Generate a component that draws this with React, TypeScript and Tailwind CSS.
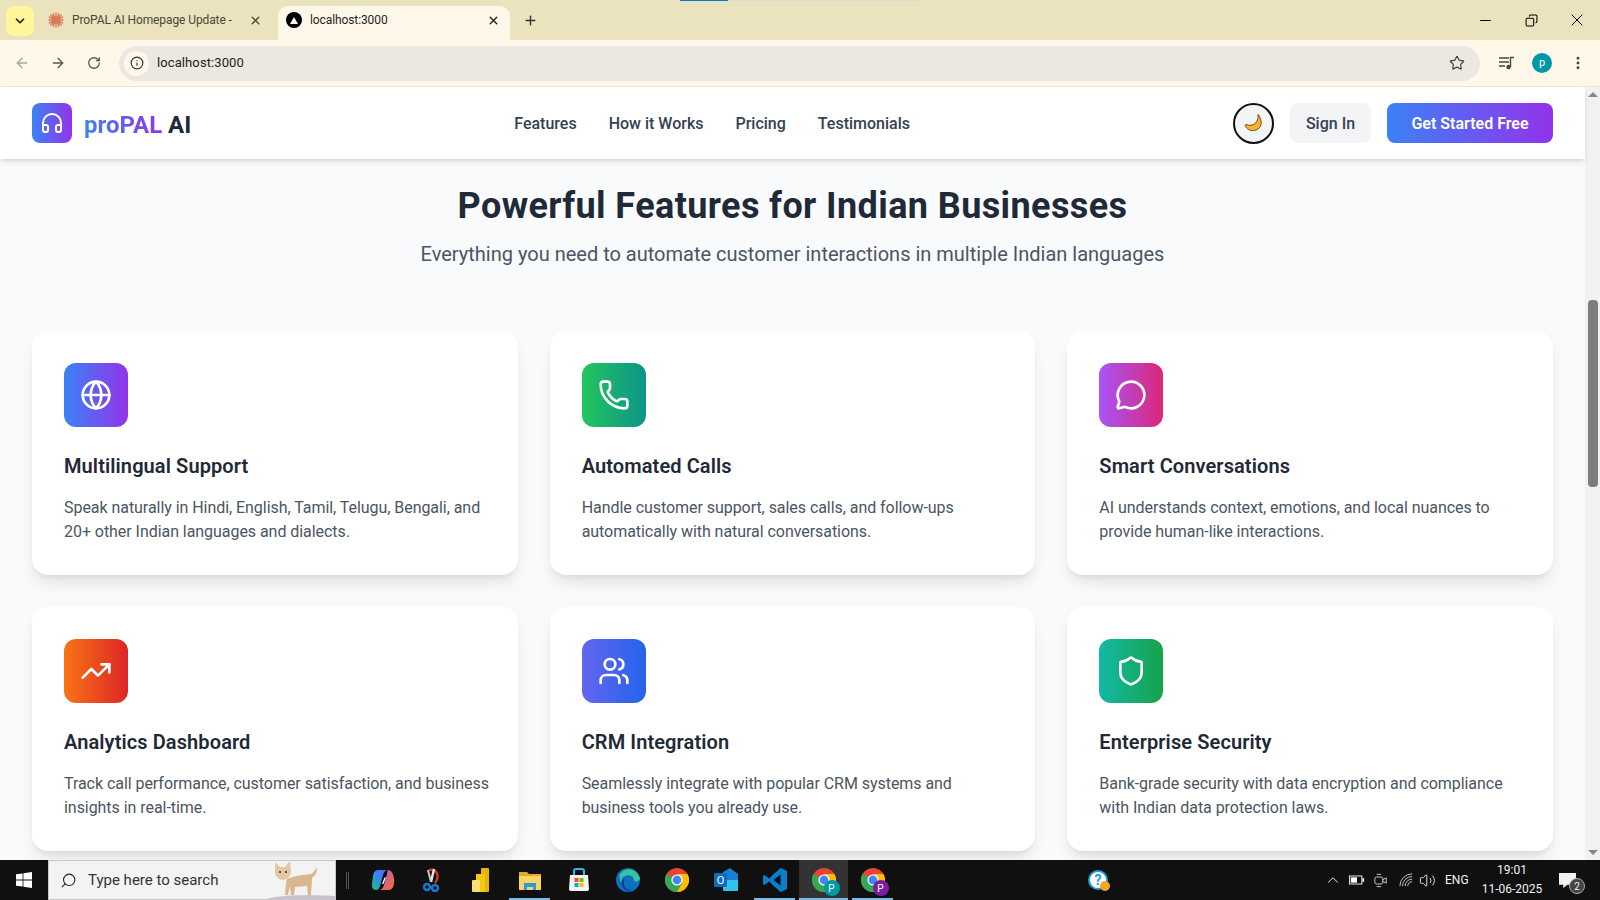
import { ArrowLeft, ArrowRight, ChevronDown, ChevronUp, Copy, Globe, Headphones, Info, MessageCircle, Minus, MoreVertical, Phone, Plus, RotateCw, Search, Shield, Star, TrendingUp, Users, Volume2, X } from 'lucide-react'

const features = [
  {
    title: 'Multilingual Support',
    text: 'Speak naturally in Hindi, English, Tamil, Telugu, Bengali, and 20+ other Indian languages and dialects.',
    icon: Globe,
    gradient: 'from-[#3b82f6] to-[#9333ea]',
  },
  {
    title: 'Automated Calls',
    text: 'Handle customer support, sales calls, and follow-ups automatically with natural conversations.',
    icon: Phone,
    gradient: 'from-[#22c55e] to-[#0d9488]',
  },
  {
    title: 'Smart Conversations',
    text: 'AI understands context, emotions, and local nuances to provide human-like interactions.',
    icon: MessageCircle,
    gradient: 'from-[#a855f7] to-[#db2777]',
  },
  {
    title: 'Analytics Dashboard',
    text: 'Track call performance, customer satisfaction, and business insights in real-time.',
    icon: TrendingUp,
    gradient: 'from-[#f97316] to-[#dc2626]',
  },
  {
    title: 'CRM Integration',
    text: 'Seamlessly integrate with popular CRM systems and business tools you already use.',
    icon: Users,
    gradient: 'from-[#6366f1] to-[#2563eb]',
  },
  {
    title: 'Enterprise Security',
    text: 'Bank-grade security with data encryption and compliance with Indian data protection laws.',
    icon: Shield,
    gradient: 'from-[#14b8a6] to-[#16a34a]',
  },
]

const ChromeIcon = ({ badge, badgeClass }: { badge?: string; badgeClass?: string }) => (
  <div className="relative w-6 h-6">
    <svg viewBox="0 0 24 24" className="w-6 h-6">
      <circle cx="12" cy="12" r="12" fill="#ea4335" />
      <path d="M12 12 1.6 6A12 12 0 0 0 12 24l5-9z" fill="#34a853" />
      <path d="M12 6h10.4A12 12 0 0 1 12 24l5.2-9z" fill="#fbbc04" />
      <circle cx="12" cy="12" r="5.6" fill="#fff" />
      <circle cx="12" cy="12" r="4.4" fill="#4285f4" />
    </svg>
    {badge && (
      <div className={`absolute -right-[4px] -bottom-[4px] w-4 h-4 rounded-full flex items-center justify-center text-[10px] text-white ${badgeClass}`}>
        {badge}
      </div>
    )}
  </div>
)

const TaskIcon = ({ children, active, open }: { children: React.ReactNode; active?: boolean; open?: boolean }) => (
  <div className={`relative w-[49px] h-10 flex items-center justify-center ${active ? 'bg-[#333333]' : ''}`}>
    {children}
    {open && <div className={`absolute bottom-0 h-[2px] bg-[#76b9ed] ${active ? 'inset-x-0' : 'inset-x-[4px]'}`} />}
  </div>
)

const BrowserBar = () => (
  <div className="shrink-0 text-[12px]">
    {/* tab strip */}
    <div className="relative h-10 bg-[#eae3be] flex items-end pl-[6px]">
      <div className="absolute top-0 left-[680px] w-[48px] h-[1px] bg-[#0078d4]" />
      <div className="absolute top-0 left-[728px] w-[193px] h-[1px] bg-[#dddcd4]" />
      <div className="self-start mt-[6px] w-7 h-[30px] rounded-lg bg-[#fff59a] flex items-center justify-center">
        <ChevronDown size={14} strokeWidth={3} className="text-[#222]" />
      </div>
      <div className="w-[244px] h-[34px] flex items-center pl-[14px] pr-[16px] pb-[6px] text-[#4b4636]">
        <svg viewBox="0 0 16 16" className="w-4 h-4 shrink-0 text-[#d97757]" stroke="currentColor" strokeWidth="1.4" strokeLinecap="round">
          <path d="M8 1v14M1 8h14M3 3l10 10M13 3 3 13M5 1.500l6 13M11 1.500l-6 13M1.500 5l13 6M1.500 11l13-6" />
        </svg>
        <span className="ml-2 flex-1 whitespace-nowrap overflow-hidden tracking-[-0.1px]">ProPAL AI Homepage Update -</span>
        <X size={13} strokeWidth={2.4} className="ml-2 shrink-0 text-[#4b4636]" />
      </div>
      <div className="w-[232px] h-[34px] rounded-t-[10px] bg-[#fff8ea] flex items-center pl-[8px] pr-[10px] pb-[6px] text-[#1f1f1f]">
        <div className="w-4 h-4 rounded-full bg-black flex items-center justify-center shrink-0">
          <div className="w-0 h-0 border-x-[4px] border-x-transparent border-b-[7px] border-b-white" />
        </div>
        <span className="ml-2 flex-1 tracking-[-0.1px]">localhost:3000</span>
        <X size={13} strokeWidth={2.6} className="text-[#222]" />
      </div>
      <div className="self-start mt-[6px] ml-[6px] w-7 h-7 flex items-center justify-center">
        <Plus size={15} strokeWidth={2.2} className="text-[#333]" />
      </div>
      <div className="flex-1" />
      <div className="self-start flex items-center h-10 text-black">
        <div className="w-[46px] flex justify-center"><Minus size={17} strokeWidth={1.4} /></div>
        <div className="w-[46px] flex justify-center"><Copy size={13} strokeWidth={1.9} className="-scale-x-100" /></div>
        <div className="w-[46px] flex justify-center"><X size={20} strokeWidth={1.2} /></div>
      </div>
    </div>
    {/* address bar */}
    <div className="h-[47px] bg-[#fff8ea] border-b border-[#ebe5d3] flex items-center text-[#3d3a30] pl-[14px]">
      <ArrowLeft size={16} className="text-[#aaa69b]" />
      <ArrowRight size={16} className="ml-5 text-[#5a5646]" />
      <RotateCw size={14} strokeWidth={2.2} className="ml-[21px] text-[#5a5646]" />
      <div className="ml-[18px] flex-1 h-[35px] rounded-full bg-[#ece8e1] flex items-center pl-[5px] pr-[15px]">
        <div className="w-[25px] h-[25px] rounded-full bg-[#fff8ea] flex items-center justify-center">
          <Info size={14} className="text-[#333]" />
        </div>
        <span className="ml-2 flex-1 text-[13px] tracking-[0.1px] text-[#222]">localhost:3000</span>
        <Star size={16} strokeWidth={1.8} className="text-[#444]" />
      </div>
      <svg viewBox="0 0 16 14" className="ml-[19px] w-4 h-[14px] text-[#4b4636]" fill="none" stroke="currentColor" strokeWidth="1.4">
        <path d="M0 2h10M0 6h10M0 10h6M11.500 11V1.500H15" />
        <circle cx="9.500" cy="11" r="2.200" fill="currentColor" stroke="none" />
      </svg>
      <div className="ml-[17px] w-5 h-5 rounded-full bg-[#0097a7] text-white text-[11px] flex items-center justify-center">p</div>
      <div className="ml-[18px] mr-[14px] w-4 flex justify-center"><MoreVertical size={16} strokeWidth={2.4} className="text-[#4b4636]" /></div>
    </div>
  </div>
)

const Navbar = () => (
  <header className="relative z-10 h-[72px] shrink-0 bg-white shadow-md flex items-center justify-between px-8">
    <div className="flex items-center gap-3">
      <div className="w-10 h-10 rounded-lg bg-linear-to-r/srgb from-[#3b82f6] to-[#9333ea] flex items-center justify-center">
        <Headphones size={24} className="text-white" />
      </div>
      <div className="text-2xl font-bold leading-8 pt-[3px] text-gray-800">
        <span className="bg-linear-to-r/srgb from-[#3b82f6] to-[#9333ea] bg-clip-text text-transparent">proPAL</span> AI
      </div>
    </div>
    <nav className="flex items-center gap-8 pt-[2px] text-base font-medium text-gray-700">
      <span>Features</span>
      <span>How it Works</span>
      <span>Pricing</span>
      <span>Testimonials</span>
    </nav>
    <div className="flex items-center gap-4">
      <div className="w-[41px] h-[41px] rounded-full border-2 border-[#111] bg-gray-100 flex items-center justify-center">
        <svg viewBox="0 0 20 20" className="w-[22px] h-[22px]">
          <path d="M13.500 2.500c1 4.500-2 9-6 9.500-1.600.2-3.200 0-4.700-.6-.5.1-.8.4-.9.9 1.400 3.200 4.500 4.900 7.700 4.600 4.400-.4 7.400-4 6.900-8-.3-2.600-1.300-4.800-2.500-6.400z" fill="#fbb32b" stroke="#3a2a05" strokeWidth="0.7" />
        </svg>
      </div>
      <button className="h-10 w-[81px] pt-[2px] rounded-lg bg-gray-100 text-base font-medium text-gray-700">Sign In</button>
      <button className="h-10 w-[166px] pt-[1px] rounded-lg bg-linear-to-r/srgb from-[#3b82f6] to-[#9333ea] text-base font-semibold text-white">Get Started Free</button>
    </div>
  </header>
)

const Taskbar = () => (
  <footer className="h-10 shrink-0 bg-[#101010] flex items-center text-white">
    <div className="w-12 flex justify-center">
      <svg viewBox="0 0 16 16" className="w-4 h-4" fill="#fff">
        <path d="M0 2.300 6.600 1.400v6.200H0zM7.400 1.300 16 0v7.600H7.400zM0 8.400h6.600v6.200L0 13.700zM7.400 8.400H16V16l-8.600-1.200z" />
      </svg>
    </div>
    <div className="relative w-[288px] h-10 bg-[#f3f3f3] border border-[#c8c8c8] flex items-center pl-[11px] text-[#333] overflow-hidden">
      <Search size={17} strokeWidth={1.5} className="-scale-x-100 text-[#222]" />
      <span className="ml-[11px] text-[15px]">Type here to search</span>
      <svg viewBox="0 0 75 40" className="absolute right-0 bottom-0 w-[75px] h-10">
        <ellipse cx="48" cy="43" rx="46" ry="7" fill="#c9bfd0" />
        <path d="M27 20c8-4 18-4 24-5 2-1 4-3 5-6l1 1c0 4-2 7-5 9 0 6-1 12-1 17h-3l-1-9-12 1-1 8h-3l-1-9-2 9h-3l1-12z" fill="#d9b78f" />
        <path d="M15 3l5 5h5l5-6 1 10c0 5-4 9-8 9s-8-4-8-8z" fill="#e3c6a2" />
        <circle cx="20" cy="13" r="1" fill="#3a2a1a" />
        <circle cx="26" cy="13" r="1" fill="#3a2a1a" />
      </svg>
    </div>
    <div className="w-[22px] flex justify-center">
      <div className="w-[3px] h-[17px] border-x border-[#555]" />
    </div>
    <TaskIcon>
      <svg viewBox="0 0 24 24" className="w-6 h-6">
        <defs>
          <linearGradient id="copilotA" x1="0" y1="1" x2="1" y2="0">
            <stop offset="0" stopColor="#22c55e" />
            <stop offset="0.5" stopColor="#2f8cf0" />
            <stop offset="1" stopColor="#6d5bf5" />
          </linearGradient>
          <linearGradient id="copilotB" x1="0" y1="0" x2="1" y2="1">
            <stop offset="0" stopColor="#a855f7" />
            <stop offset="1" stopColor="#f97316" />
          </linearGradient>
        </defs>
        <path d="M7 2h10c-3 0-4 2-5 5l-3 11c-.6 2.500-2 4-4 4-3 0-4.500-3-4-6l1-8C2.500 4 4 2 7 2z" fill="url(#copilotA)" />
        <path d="M17 2c3 0 5 3 6 8 .8 5-.5 12-5 12H8c2.500 0 4-2 5-5l3-11c.4-2 .6-4 1-4z" fill="url(#copilotB)" />
        <path d="M13.500 9.500 11 16h1.500L15 9.500z" fill="#fff" />
      </svg>
    </TaskIcon>
    <TaskIcon>
      <svg viewBox="0 0 24 24" className="w-6 h-6" fill="none">
        <path d="M9 2c8-2 11 7 6 13" stroke="#d13a1a" strokeWidth="2.400" />
        <path d="M14 1 11 14" stroke="#e8e8e8" strokeWidth="2.400" />
        <path d="M8 2 11 14" stroke="#c8c8c8" strokeWidth="2" />
        <circle cx="7" cy="19" r="3" stroke="#1479d4" strokeWidth="2.400" />
        <circle cx="15" cy="20" r="3" stroke="#1479d4" strokeWidth="2.400" />
      </svg>
    </TaskIcon>
    <TaskIcon>
      <svg viewBox="0 0 24 24" className="w-6 h-6">
        <rect x="12" y="0" width="8" height="24" rx="1" fill="#eab308" />
        <rect x="7" y="6" width="9" height="18" fill="#f2c811" />
        <rect x="3" y="12" width="8" height="12" rx="1" fill="#f9e076" />
      </svg>
    </TaskIcon>
    <TaskIcon open>
      <svg viewBox="0 0 24 24" className="w-6 h-6">
        <path d="M1 4h8l2 2h12v15a1 1 0 0 1-1 1H2a1 1 0 0 1-1-1z" fill="#e0a92c" />
        <path d="M1 8h22v13a1 1 0 0 1-1 1H2a1 1 0 0 1-1-1z" fill="#fbd564" />
        <path d="M6 22v-7h12v7h-3v-3H9v3z" fill="#2b9bd8" />
      </svg>
    </TaskIcon>
    <TaskIcon>
      <svg viewBox="0 0 24 24" className="w-6 h-6">
        <path d="M3 7h18l1 14a2 2 0 0 1-2 2H4a2 2 0 0 1-2-2z" fill="#f4f4f4" />
        <path d="M7 7V3a2 2 0 0 1 2-2h6a2 2 0 0 1 2 2v4" fill="none" stroke="#2bb8ee" strokeWidth="2" />
        <rect x="7.500" y="10" width="4" height="4" fill="#f25022" />
        <rect x="12.500" y="10" width="4" height="4" fill="#7fba00" />
        <rect x="7.500" y="15" width="4" height="4" fill="#00a4ef" />
        <rect x="12.500" y="15" width="4" height="4" fill="#ffb900" />
      </svg>
    </TaskIcon>
    <TaskIcon>
      <svg viewBox="0 0 24 24" className="w-6 h-6">
        <circle cx="12" cy="12" r="12" fill="#0c6fc0" />
        <path d="M4 6C8-1 20-1 24 10c0 3-3 4-6 3 0-5-5-7-9-5-3 1-4 4-4 7-1-3-2-6-1-9z" fill="#36c3a0" />
        <path d="M8 14c-1 5 3 8 8 8-3 1.500-8 1-10-4-1-3 0-6 3-8-1 1-1 2-1 4z" fill="#0a3f8a" />
      </svg>
    </TaskIcon>
    <TaskIcon><ChromeIcon /></TaskIcon>
    <TaskIcon>
      <svg viewBox="0 0 24 24" className="w-6 h-6">
        <path d="M9 4l7-4 8 6v12l-4 3H9z" fill="#1a7fd4" />
        <path d="M9 12h15v10a1 1 0 0 1-1 1H10a1 1 0 0 1-1-1z" fill="#2fc4f0" />
        <rect x="0" y="5" width="13" height="14" rx="1" fill="#0f6cbd" />
        <text x="6.500" y="16" textAnchor="middle" fontSize="11" fill="#fff" fontFamily="Roboto, sans-serif">O</text>
      </svg>
    </TaskIcon>
    <TaskIcon open>
      <svg viewBox="0 0 24 24" className="w-6 h-6">
        <path d="M17.500 0 24 3v18l-6.500 3L6 13.500 1.500 17 0 16V8l1.500-1L6 10.500z" fill="#0a7fd0" />
        <path d="M17.500 6.500 10.500 12l7 5.500z" fill="#101010" />
      </svg>
    </TaskIcon>
    <TaskIcon active open><ChromeIcon badge="P" badgeClass="bg-[#0097a7]" /></TaskIcon>
    <TaskIcon open><ChromeIcon badge="P" badgeClass="bg-[#7b1fa2]" /></TaskIcon>
    <div className="flex-1 flex justify-end pr-[216px]">
      <div className="relative w-5 h-5 rounded-full bg-white border-2 border-[#1aa0dc] flex items-center justify-center text-[#1aa0dc] text-[14px] font-bold leading-none">
        ?
        <div className="absolute -right-[4px] -bottom-[3px] w-[10px] h-[10px] rounded-full bg-[#f5a623]" />
      </div>
    </div>
    <div className="flex items-center h-10 text-[#f2f2f2] text-[12px] whitespace-nowrap">
      <ChevronUp size={18} strokeWidth={1.3} />
      <svg viewBox="0 0 18 10" className="ml-[7px] w-[16px] h-[10px]" fill="none">
        <rect x="0.500" y="0.500" width="14" height="9" stroke="#fff" />
        <rect x="2" y="2" width="7" height="6" fill="#fff" />
        <rect x="15" y="3" width="2" height="4" fill="#fff" />
      </svg>
      <svg viewBox="0 0 16 18" className="ml-[9px] w-[14px] h-[17px]" fill="none" stroke="#ddd">
        <rect x="1" y="5" width="9" height="8" rx="2" />
        <path d="m10 8 4-2v6l-4-2M3 2h5M3 16h5" />
      </svg>
      <svg viewBox="0 0 16 16" className="ml-[11px] w-[14px] h-[14px]" fill="none" stroke="#ddd">
        <path d="M1 15A14 14 0 0 1 15 1M4 15A11 11 0 0 1 15 4M7 15a8 8 0 0 1 8-8M10 15a5 5 0 0 1 5-5" />
      </svg>
      <Volume2 size={17} strokeWidth={1.3} className="ml-[6px]" />
      <span className="ml-[9px] w-[24px]">ENG</span>
      <div className="ml-[10px] w-[66px] text-center leading-[19px]">
        <div>19:01</div>
        <div>11-06-2025</div>
      </div>
      <div className="relative ml-[14px] mr-[17px] w-6 h-6 flex items-center">
        <svg viewBox="0 0 16 16" className="w-[17px] h-[17px]" fill="#f2f2f2">
          <path d="M0 1h16v11H8l-4 3v-3H0z" />
        </svg>
        <div className="absolute -right-[2px] -bottom-[2px] w-4 h-4 rounded-full bg-[#444] border border-[#aaa] text-[10px] flex items-center justify-center">2</div>
      </div>
    </div>
  </footer>
)

export default function App() {
  return (
    <div className="h-screen w-full flex flex-col overflow-hidden font-['Roboto',sans-serif]">
      <BrowserBar />
      <div className="flex-1 min-h-0 flex">
        <div className="flex-1 min-w-0 flex flex-col bg-[#f9fafb]">
          <Navbar />
          <main className="flex-1 min-h-0 overflow-hidden px-8 pt-[27px]">
            <h2 className="text-4xl font-bold tracking-[0.4px] text-center text-[#1f2937]">Powerful Features for Indian Businesses</h2>
            <p className="mt-[14px] text-xl text-center text-[#4b5563]">Everything you need to automate customer interactions in multiple Indian languages</p>
            <div className="mt-[63px] grid grid-cols-3 gap-8">
              {features.map((f) => (
                <div key={f.title} className="bg-white rounded-2xl shadow-lg px-8 pt-8 pb-[31px]">
                  <div className={`w-16 h-16 rounded-xl bg-linear-to-r/srgb ${f.gradient} flex items-center justify-center mb-[25px]`}>
                    <f.icon size={32} className="text-white" />
                  </div>
                  <h3 className="text-xl font-semibold tracking-[0.1px] text-[#1f2937] mb-4">{f.title}</h3>
                  <p className="-mr-1 text-base tracking-[-0.05px] text-[#4b5563]">{f.text}</p>
                </div>
              ))}
            </div>
          </main>
        </div>
        {/* scrollbar */}
        <div className="w-[15px] shrink-0 bg-[#f1f1f1] flex flex-col items-center justify-between py-[5px]">
          <div className="w-0 h-0 border-x-[5px] border-x-transparent border-b-[5px] border-b-[#888]" />
          <div className="flex-1 w-full">
            <div className="mt-[203px] mx-auto w-[10px] h-[187px] bg-[#7d7d7d] rounded-sm" />
          </div>
          <div className="w-0 h-0 border-x-[5px] border-x-transparent border-t-[5px] border-t-[#888]" />
        </div>
      </div>
      <Taskbar />
    </div>
  )
}
